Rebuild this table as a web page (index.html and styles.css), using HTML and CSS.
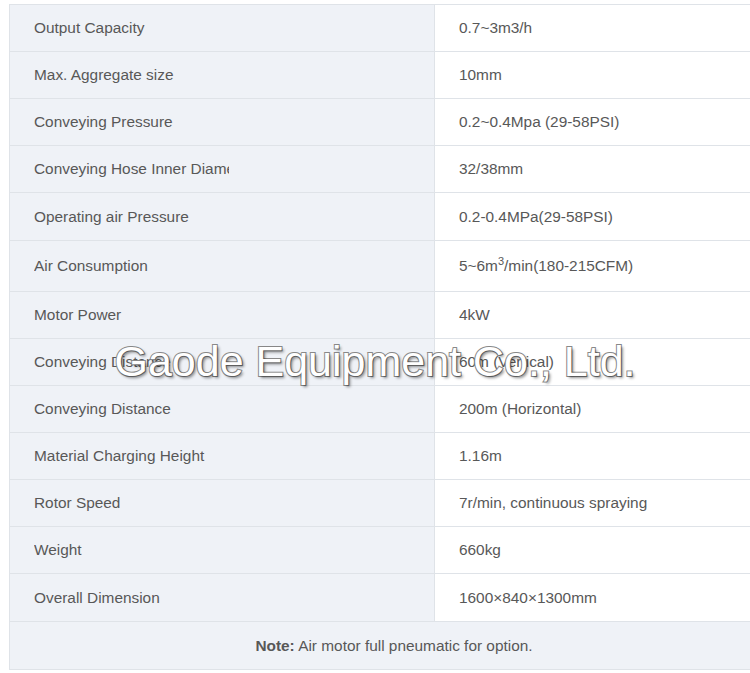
FILE: index.html
```html
<!DOCTYPE html>
<html lang="en">
<head>
  <meta charset="UTF-8">
  <meta name="viewport" content="width=device-width, initial-scale=1.0">
  <title>Specifications</title>
  <link rel="stylesheet" href="styles.css">
</head>
<body>
  <div class="page">
    <table class="spec-table">
      <tbody>
        <tr><th><span class="label">Output Capacity</span></th><td>0.7~3m3/h</td></tr>
        <tr><th><span class="label">Max. Aggregate size</span></th><td>10mm</td></tr>
        <tr><th><span class="label">Conveying Pressure</span></th><td>0.2~0.4Mpa (29-58PSI)</td></tr>
        <tr><th><span class="label">Conveying Hose Inner Diameter</span></th><td>32/38mm</td></tr>
        <tr class="row-48"><th><span class="label">Operating air Pressure</span></th><td>0.2-0.4MPa(29-58PSI)</td></tr>
        <tr class="row-51"><th><span class="label">Air Consumption</span></th><td>5~6m<sup>3</sup>/min(180-215CFM)</td></tr>
        <tr><th><span class="label">Motor Power</span></th><td>4kW</td></tr>
        <tr><th><span class="label">Conveying Distance</span></th><td>60m (Vertical)</td></tr>
        <tr><th><span class="label">Conveying Distance</span></th><td>200m (Horizontal)</td></tr>
        <tr><th><span class="label">Material Charging Height</span></th><td>1.16m</td></tr>
        <tr><th><span class="label">Rotor Speed</span></th><td>7r/min, continuous spraying</td></tr>
        <tr><th><span class="label">Weight</span></th><td>660kg</td></tr>
        <tr class="row-48"><th><span class="label">Overall Dimension</span></th><td>1600×840×1300mm</td></tr>
        <tr class="note-row"><td colspan="2"><strong>Note:</strong> Air motor full pneumatic for option.</td></tr>
      </tbody>
    </table>
    <div class="watermark">Gaode Equipment Co., Ltd.</div>
  </div>
</body>
</html>
```

FILE: styles.css
```css
* {
  box-sizing: border-box;
  margin: 0;
  padding: 0;
}
html, body {
  overflow: hidden;
}
body {
  font-family: "Liberation Sans", Arial, sans-serif;
  background-color: #fff;
  color: #585858;
}
.page {
  position: relative;
  padding: 4px 0 0 9px;
  width: 790px;
}
.spec-table {
  width: 770px;
  border-collapse: collapse;
  border: 1px solid #dfe3e8;
  font-size: 15.4px;
}
.spec-table th,
.spec-table td {
  height: 47px;
  border: 1px solid #dfe3e8;
  text-align: left;
  vertical-align: middle;
  font-weight: normal;
  padding: 0 24px;
}
.spec-table th {
  width: 425px;
  background-color: #eff2f7;
}
.spec-table td {
  background-color: #fff;
}
.spec-table .row-48 th,
.spec-table .row-48 td {
  height: 48px;
}
.spec-table .row-51 th,
.spec-table .row-51 td {
  height: 51px;
}
.label {
  display: block;
  max-width: 195px;
  white-space: nowrap;
  overflow: hidden;
}
sup {
  font-size: 11px;
  line-height: 0;
  vertical-align: 6px;
}
.spec-table .note-row td {
  background-color: #eff2f7;
  text-align: center;
  height: 48px;
}
.note-row strong {
  font-weight: bold;
}

/* Watermark over the table */
.watermark {
  position: absolute;
  top: 339px;
  left: 0;
  width: 750px;
  text-align: center;
  font-family: "Liberation Sans", Arial, sans-serif;
  font-size: 43px;
  line-height: 44px;
  color: #fff;
  -webkit-text-stroke: 2px #8a8a8a;
  paint-order: stroke fill;
  text-shadow: 2px 2px 3px rgba(0, 0, 0, 0.45);
  white-space: nowrap;
}
```
